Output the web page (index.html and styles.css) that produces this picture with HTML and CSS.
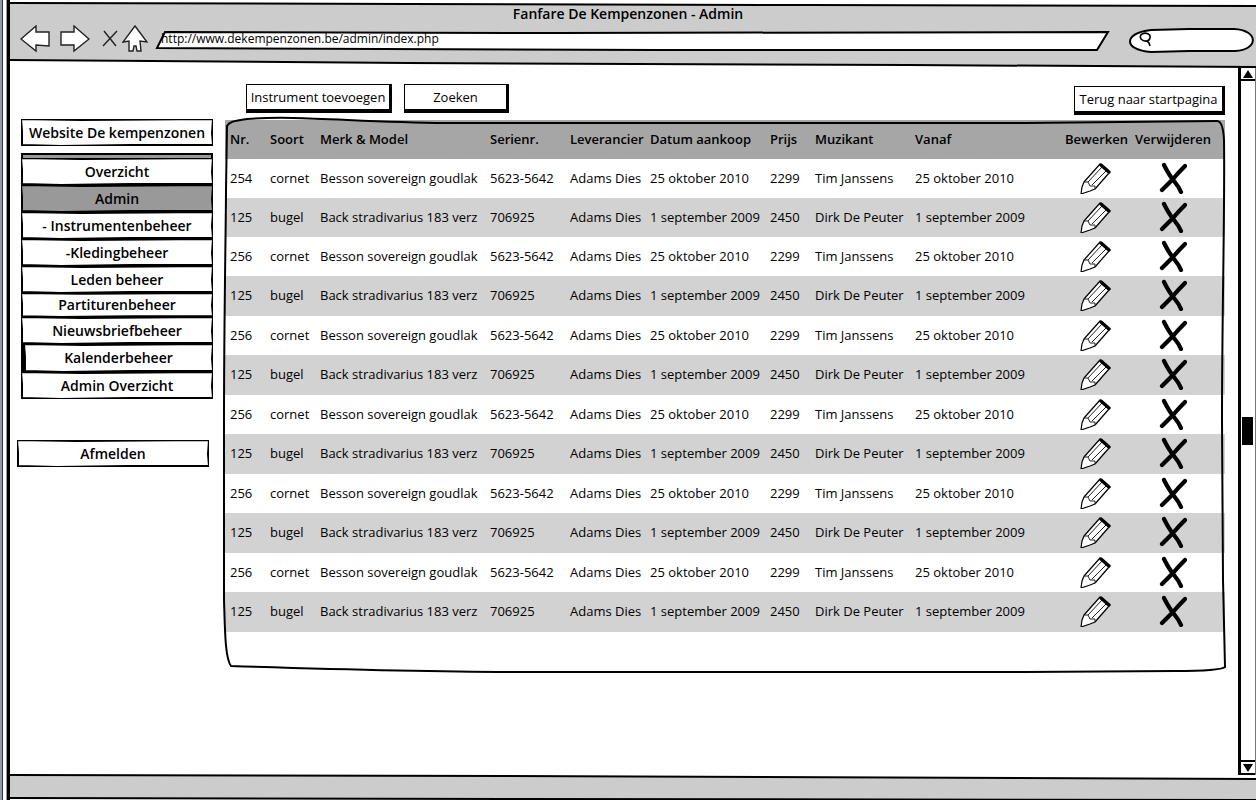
FILE: index.html
```html
<!DOCTYPE html>
<html lang="nl">
<head>
<meta charset="utf-8">
<title>Fanfare De Kempenzonen - Admin</title>
<link rel="stylesheet" href="styles.css">
</head>
<body>
<svg class="defs" aria-hidden="true">
  <symbol id="pencil" viewBox="0 0 32 32">
    <path d="M21 2 30 11 16 27 11 29 2 32 3 25 5 20Z" fill="#fff" stroke="#000" stroke-width="1.2" stroke-linejoin="round"/>
    <path d="M5 20 9 20 11 24 16 24 16 27M9 20 23 5M13 23 27 9" fill="none" stroke="#222" stroke-width="1"/>
    <path d="M22 3 30 10" stroke="#000" stroke-width="3.4" stroke-linecap="round"/>
  </symbol>
  <symbol id="cross" viewBox="0 0 28 32">
    <path d="M5 3 Q10 13 15 19 Q20 25 22 30M26 4 Q19 11 14 17 Q8 23 3 28" fill="none" stroke="#000" stroke-width="4.2" stroke-linecap="round"/>
  </symbol>
  <symbol id="box" viewBox="0 0 192 27" preserveAspectRatio="none">
    <path d="M0 0 60 1 192 0 191 14 192 26 110 26 40 27 1 26 1 12Z" fill="none" stroke="#000" stroke-width="2"/>
  </symbol>
</svg>
<div class="window">
  <header class="chrome">
    <svg class="sketch" viewBox="0 0 1248 62" preserveAspectRatio="none" aria-hidden="true">
      <path d="M1 -1 400 0 800 1 1250 2 1250 63 900 61 400 59 1 56Z" fill="#ccc" stroke="#000" stroke-width="2" vector-effect="non-scaling-stroke"/>
    </svg>
    <h1 class="title">Fanfare De Kempenzonen - Admin</h1>
    <div class="toolbar">
      <button class="nav" aria-label="Vorige"><svg width="30" height="28" viewBox="0 0 30 28"><path d="M1 14 16 1 16 7 29 7 29 21 16 20 16 26Z"/></svg></button>
      <button class="nav" aria-label="Volgende"><svg width="30" height="28" viewBox="0 0 30 28"><path d="M29 14 14 1 14 7 1 7 1 20 14 20 14 26Z"/></svg></button>
      <button class="nav" aria-label="Stoppen"><svg width="16" height="28" viewBox="0 0 16 28"><path d="M2 6 14 21M15 6 1 21"/></svg></button>
      <button class="nav" aria-label="Start"><svg width="26" height="28" viewBox="0 0 26 28"><path d="M13 1 25 17 18 16 19 26 15 26 14 21 12 21 11 26 7 26 7 16 1 17Z"/></svg></button>
      <label class="address">
        <svg class="sketch" viewBox="0 0 952 20" preserveAspectRatio="none" aria-hidden="true"><path d="M9 1 400 2 951 1 940 19 500 19 1 17Z" fill="#fff" stroke="#000" stroke-width="2" vector-effect="non-scaling-stroke"/></svg>
        <input type="text" aria-label="Adres" value="http://www.dekempenzonen.be/admin/index.php">
      </label>
      <label class="search">
        <svg class="sketch" viewBox="0 0 126 26" preserveAspectRatio="none" aria-hidden="true"><path d="M22 2 60 1 105 1C130 2 130 22 106 23L60 23 22 24C-6 22-6 5 22 2Z" fill="#fff" stroke="#000" stroke-width="2" vector-effect="non-scaling-stroke"/></svg>
        <svg class="lens" width="14" height="16" viewBox="0 0 14 16" aria-hidden="true"><path d="M3 2C7 0 12 2 11 6 10 10 5 10 2 7 1 5 1 3 3 2M8 9 10 11 11 14" fill="none" stroke="#000" stroke-width="1.6"/></svg>
        <input type="search" aria-label="Zoeken op het web">
      </label>
    </div>
  </header>

  <div class="body">
    <nav class="sidebar">
      <a class="item" href="#">Website De kempenzonen<svg class="sketch"><use href="#box"/></svg></a>
      <div class="menu">
        <div class="strip"></div>
        <a class="item" href="#">Overzicht<svg class="sketch"><use href="#box"/></svg></a>
        <a class="item active" href="#">Admin<svg class="sketch"><use href="#box"/></svg></a>
        <a class="item" href="#">- Instrumentenbeheer<svg class="sketch"><use href="#box"/></svg></a>
        <a class="item" href="#">-Kledingbeheer<svg class="sketch"><use href="#box"/></svg></a>
        <a class="item" href="#">Leden beheer<svg class="sketch"><use href="#box"/></svg></a>
        <a class="item short" href="#">Partiturenbeheer<svg class="sketch"><use href="#box"/></svg></a>
        <a class="item" href="#">Nieuwsbriefbeheer<svg class="sketch"><use href="#box"/></svg></a>
        <a class="item heavy" href="#">Kalenderbeheer<svg class="sketch"><use href="#box"/></svg></a>
        <a class="item" href="#">Admin Overzicht<svg class="sketch"><use href="#box"/></svg></a>
      </div>
      <a class="item logout" href="#">Afmelden<svg class="sketch"><use href="#box"/></svg></a>
    </nav>

    <main class="content">
      <div class="actions">
        <button class="btn">Instrument toevoegen</button>
        <button class="btn find">Zoeken</button>
        <button class="btn home">Terug naar startpagina</button>
      </div>
      <div class="panel">
        <table>
          <colgroup><col class="c-nr"><col class="c-kind"><col class="c-model"><col class="c-serial"><col class="c-serial"><col class="c-date"><col class="c-price"><col class="c-who"><col class="c-from"><col class="c-edit"><col class="c-del"></colgroup>
          <thead>
            <tr><th>Nr.</th><th>Soort</th><th>Merk &amp; Model</th><th>Serienr.</th><th>Leverancier</th><th>Datum aankoop</th><th>Prijs</th><th>Muzikant</th><th>Vanaf</th><th>Bewerken</th><th>Verwijderen</th></tr>
          </thead>
          <tbody id="rows"></tbody>
        </table>
        <svg class="sketch" viewBox="0 0 1000 552" preserveAspectRatio="none" aria-hidden="true">
          <path d="M2 6C4 2 8 1 22-1C70-5 130 2 220 3C450 4 650 4 800 3L992 1Q998 1 999 20C1000 90 997 190 997 300L998 460 1000 547Q995 551 950 551L800 552 300 552C200 552 100 549 6 546C0 538 0 510 -1 480L-1 300C-1 200 1 100 1 70Z" fill="none" stroke="#000" stroke-width="2" vector-effect="non-scaling-stroke"/>
        </svg>
      </div>
    </main>

    <div class="scroll">
      <button aria-label="Omhoog"><svg width="10" height="8" viewBox="0 0 10 8"><path d="M5 0 10 8 0 8Z"/></svg></button>
      <div class="track"><div class="thumb"></div></div>
      <button aria-label="Omlaag"><svg width="10" height="8" viewBox="0 0 10 8"><path d="M5 8 10 0 0 0Z"/></svg></button>
    </div>
  </div>

  <footer class="status">
    <svg class="sketch" viewBox="0 0 1248 24" preserveAspectRatio="none" aria-hidden="true"><path d="M1 0 500 1 1250 4 1250 25 500 24 1 23Z" fill="#ccc" stroke="#000" stroke-width="2" vector-effect="non-scaling-stroke"/></svg>
  </footer>
</div>
<script src="rows.js"></script>
</body>
</html>
```

FILE: styles.css
```css
* { box-sizing: border-box; }
body {
  margin: 0;
  font-family: "Comic Sans MS", "Open Sans", sans-serif;
  font-size: 13px;
  line-height: 18px;
  color: #000;
  background: linear-gradient(90deg, #8d9aa5 0 2px, #27333d 2px 3px, #fff 3px 6px, #999 6px 7px, #fff 7px);
}
button, input { font: inherit; color: inherit; padding: 0; border: 0; background: none; outline: none; }
a { color: inherit; text-decoration: none; }
.defs { position: absolute; width: 0; height: 0; }
.window {
  display: flex;
  flex-direction: column;
  min-height: 100vh;
  margin-left: 7px;
  padding: 4px 0 1px;
  border-left: 3px solid #000;
  overflow: hidden;
}
.sketch {
  position: absolute;
  inset: 0;
  width: 100%;
  height: 100%;
  overflow: visible;
  pointer-events: none;
}

.chrome { position: relative; height: 62px; margin-left: -2px; }
.title { position: relative; margin: 0; padding-right: 8px; font-size: 14px; font-weight: 600; line-height: 20px; text-align: center; }
.toolbar { position: relative; display: flex; align-items: center; padding-left: 12px; }
.nav { display: flex; margin-right: 10px; }
.nav:nth-child(2) { margin-right: 12px; }
.nav:nth-child(3) { margin-right: 4px; }
.nav:nth-child(4) { margin-right: 8px; }
.nav path { fill: #fff; stroke: #222; stroke-width: 1.4; }
.address { position: relative; flex: 1; height: 20px; margin-top: 4px; }
.address input { position: relative; display: block; width: 100%; height: 16px; padding: 0 16px 0 5px; font-size: 12px; }
.search { position: relative; display: flex; width: 126px; height: 26px; margin: 4px 1px 0 20px; }
.lens { position: relative; margin: 4px 4px 0 10px; flex: none; }
.search input { position: relative; width: 90px; }

.body { display: flex; flex: 1; }
.sidebar { flex: none; width: 203px; padding: 53px 0 0 11px; }
.item {
  position: relative;
  display: flex;
  align-items: center;
  justify-content: center;
  height: 27px;
  font-size: 14px;
  font-weight: 600;
}
.menu { padding-top: 7px; }
.strip { height: 5px; background: #999; border: solid #000; border-width: 2px 2px 0; }
.active { background: #999; }
.short { height: 24px; }
.heavy { height: 28px; border-left: 3px solid #000; }
.logout { margin: 41px 4px 0 -4px; }

.content { flex: 1; min-width: 0; margin: 0 13px 0 12px; }
.actions { display: flex; align-items: flex-start; gap: 12px; padding: 18px 0 0 21px; height: 54px; }
.btn {
  height: 29px;
  padding: 0 3px;
  border: solid #000;
  border-width: 1px 3px 4px 1px;
  background: #fff;
  min-width: 146px;
}
.find { min-width: 105px; }
.home { margin: 2px 0 0 auto; min-width: 151px; }
.panel { position: relative; padding-bottom: 40px; }
table { width: 100%; border-collapse: collapse; table-layout: fixed; }
th, td { padding: 0 0 2px 5px; text-align: left; white-space: nowrap; }
th { height: 39px; background: #a6a6a6; font-weight: 600; }
td { height: 39px; overflow: hidden; }
tr:nth-child(even) td { background: #d2d2d2; }
tr:nth-child(even):not(:nth-child(2)) td { height: 40px; }
td button { display: flex; }
td svg { display: block; width: 32px; height: 32px; }
.edit { padding-left: 19px; }
.delete { padding-left: 29px; }
.delete svg { width: 28px; }
.c-nr { width: 40px; }
.c-kind { width: 50px; }
.c-model { width: 170px; }
.c-serial { width: 80px; }
.c-date { width: 120px; }
.c-price { width: 45px; }
.c-who { width: 100px; }
.c-from { width: 150px; }
.c-edit { width: 70px; }
.c-del { width: 95px; }

.scroll { flex: none; display: flex; flex-direction: column; width: 18px; border-left: 3px solid #000; border-right: 1px solid #777; }
.scroll button { display: flex; align-items: center; justify-content: center; height: 15px; border: solid #000; border-width: 2px 0; }
.track { flex: 1; display: grid; grid-template-rows: 336fr 29fr 315fr; }
.thumb { grid-row: 2; margin: 0 2px 0 1px; background: #000; }
.status { position: relative; height: 24px; margin-left: -2px; }
```

FILE: rows.js
```js
const cornet = ["cornet", "Besson sovereign goudlak", "5623-5642", "Adams Dies", "25 oktober 2010", "2299", "Tim Janssens", "25 oktober 2010"];
const bugel = ["bugel", "Back stradivarius 183 verz", "706925", "Adams Dies", "1 september 2009", "2450", "Dirk De Peuter", "1 september 2009"];
const body = document.getElementById("rows");
for (let i = 0; i < 12; i++) {
  const cells = i % 2 ? ["125", ...bugel] : [i ? "256" : "254", ...cornet];
  body.insertAdjacentHTML("beforeend", "<tr>" + cells.map(c => `<td>${c}</td>`).join("") +
    '<td class="edit"><button aria-label="Bewerken"><svg><use href="#pencil"/></svg></button></td>' +
    '<td class="delete"><button aria-label="Verwijderen"><svg><use href="#cross"/></svg></button></td></tr>');
}
```
